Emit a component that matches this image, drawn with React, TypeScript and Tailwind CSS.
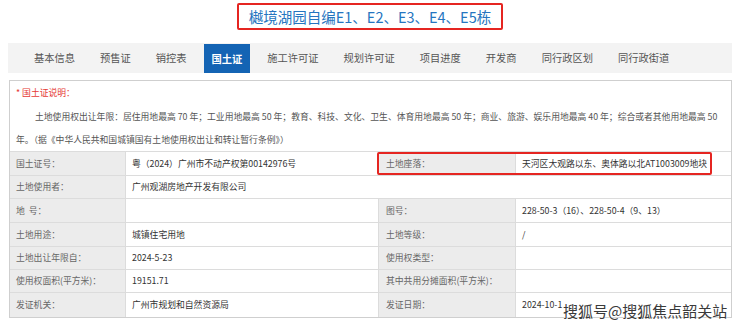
const tabs = ["基本信息", "预售证", "销控表", "国土证", "施工许可证", "规划许可证", "项目进度", "开发商", "同行政区划", "同行政街道"];

type Row = { h: string; l1: string; v1: string; l2?: string; v2?: string; full?: boolean };

const rows: Row[] = [
  { h: "h-[23px]", l1: "国土证号：", v1: "粤（2024）广州市不动产权第00142976号", l2: "土地座落：", v2: "天河区大观路以东、奥体路以北AT1003009地块" },
  { h: "h-[23px]", l1: "土地使用者：", v1: "广州观湖房地产开发有限公司", full: true },
  { h: "h-[24px]", l1: "地\u00a0\u00a0号：", v1: "", l2: "图号：", v2: "228-50-3（16）、228-50-4（9、13）" },
  { h: "h-[24px]", l1: "土地用途：", v1: "城镇住宅用地", l2: "土地等级：", v2: "/" },
  { h: "h-[23px]", l1: "土地出让年限自：", v1: "2024-5-23", l2: "使用权类型：", v2: "" },
  { h: "h-[23px]", l1: "使用权面积(平方米)：", v1: "19151.71", l2: "其中共用分摊面积(平方米)：", v2: "" },
  { h: "h-[25px]", l1: "发证机关：", v1: "广州市规划和自然资源局", l2: "发证日期：", v2: "2024-10-1" },
];

const TableRow = ({ row, first }: { row: Row; first: boolean }) => {
  return (
    <div className={`relative flex ${row.h} ${first ? "" : "border-t border-[#dcdcdc]"}`}>
      <div className="w-[115px] shrink-0 bg-[#ececec] pl-[6px] flex items-center text-[#666]">{row.l1}</div>
      {row.full ? (
        <div className="flex-1 border-l border-[#dcdcdc] pl-[6px] flex items-center text-[#333]">{row.v1}</div>
      ) : (
        <>
          <div className="w-[253px] shrink-0 border-l border-[#dcdcdc] pl-[6px] flex items-center text-[#333]">{row.v1}</div>
          <div className="w-[137px] shrink-0 border-l border-[#dcdcdc] bg-[#ececec] pl-[7px] flex items-center text-[#666]">{row.l2}</div>
          <div className="flex-1 border-l border-[#dcdcdc] pl-[6px] flex items-center text-[#333]">{row.v2}</div>
        </>
      )}
      {first && <div className="absolute left-[367px] top-0 w-[335px] h-[23px] border-2 border-[#e52521] rounded-[2px]" />}
    </div>
  );
};

export default function App() {
  return (
    <div className="relative w-[740px] h-[327px] overflow-hidden bg-white font-['Noto_Sans_CJK_SC','Noto_Sans',sans-serif]">
      <div className="flex justify-center pt-[3px]">
        <div className="h-[27px] px-[10px] border-2 border-[#e52521] rounded-[2px] flex items-center text-[14.5px] text-[#2575c0]">
          樾境湖园自编E1、E2、E3、E4、E5栋
        </div>
      </div>

      <div className="mt-[13px] ml-[8px] w-[724px] h-[30px] bg-[#f3f3f3] flex pl-[18px] gap-[9px] text-[10.25px] text-[#555]">
        {tabs.map((t) =>
          t === "国土证" ? (
            <div key={t} className="mt-[1px] px-[8px] bg-[#1464b4] text-white font-bold flex items-center">{t}</div>
          ) : (
            <div key={t} className="px-[8px] flex items-center">{t}</div>
          ),
        )}
      </div>

      <div className="mt-[7px] ml-[9px] w-[723px] border border-[#cfcfcf] text-[8.8px]">
        <div className="pl-[6px] text-[#555]">
          <div className="h-[24px] flex items-center text-[#e53935]">* 国土证说明：</div>
          <div className="h-[24px] flex items-center pl-[19px] whitespace-nowrap">
            土地使用权出让年限：居住用地最高 70 年；工业用地最高 50 年；教育、科技、文化、卫生、体育用地最高 50 年；商业、旅游、娱乐用地最高 40 年；综合或者其他用地最高 50
          </div>
          <div className="h-[22px] flex items-center whitespace-nowrap">年。（据《中华人民共和国城镇国有土地使用权出让和转让暂行条例》）</div>
        </div>
        <div className="border-t border-[#dcdcdc]">
          {rows.map((r, i) => (
            <TableRow key={i} row={r} first={i === 0} />
          ))}
        </div>
      </div>

      <div className="absolute left-[563px] top-[301px] text-[15px] leading-[20px] text-[#3a3a3a] whitespace-nowrap [text-shadow:0_0_2px_#fff,0_0_2px_#fff]">
        搜狐号@搜狐焦点韶关站
      </div>
    </div>
  );
}
